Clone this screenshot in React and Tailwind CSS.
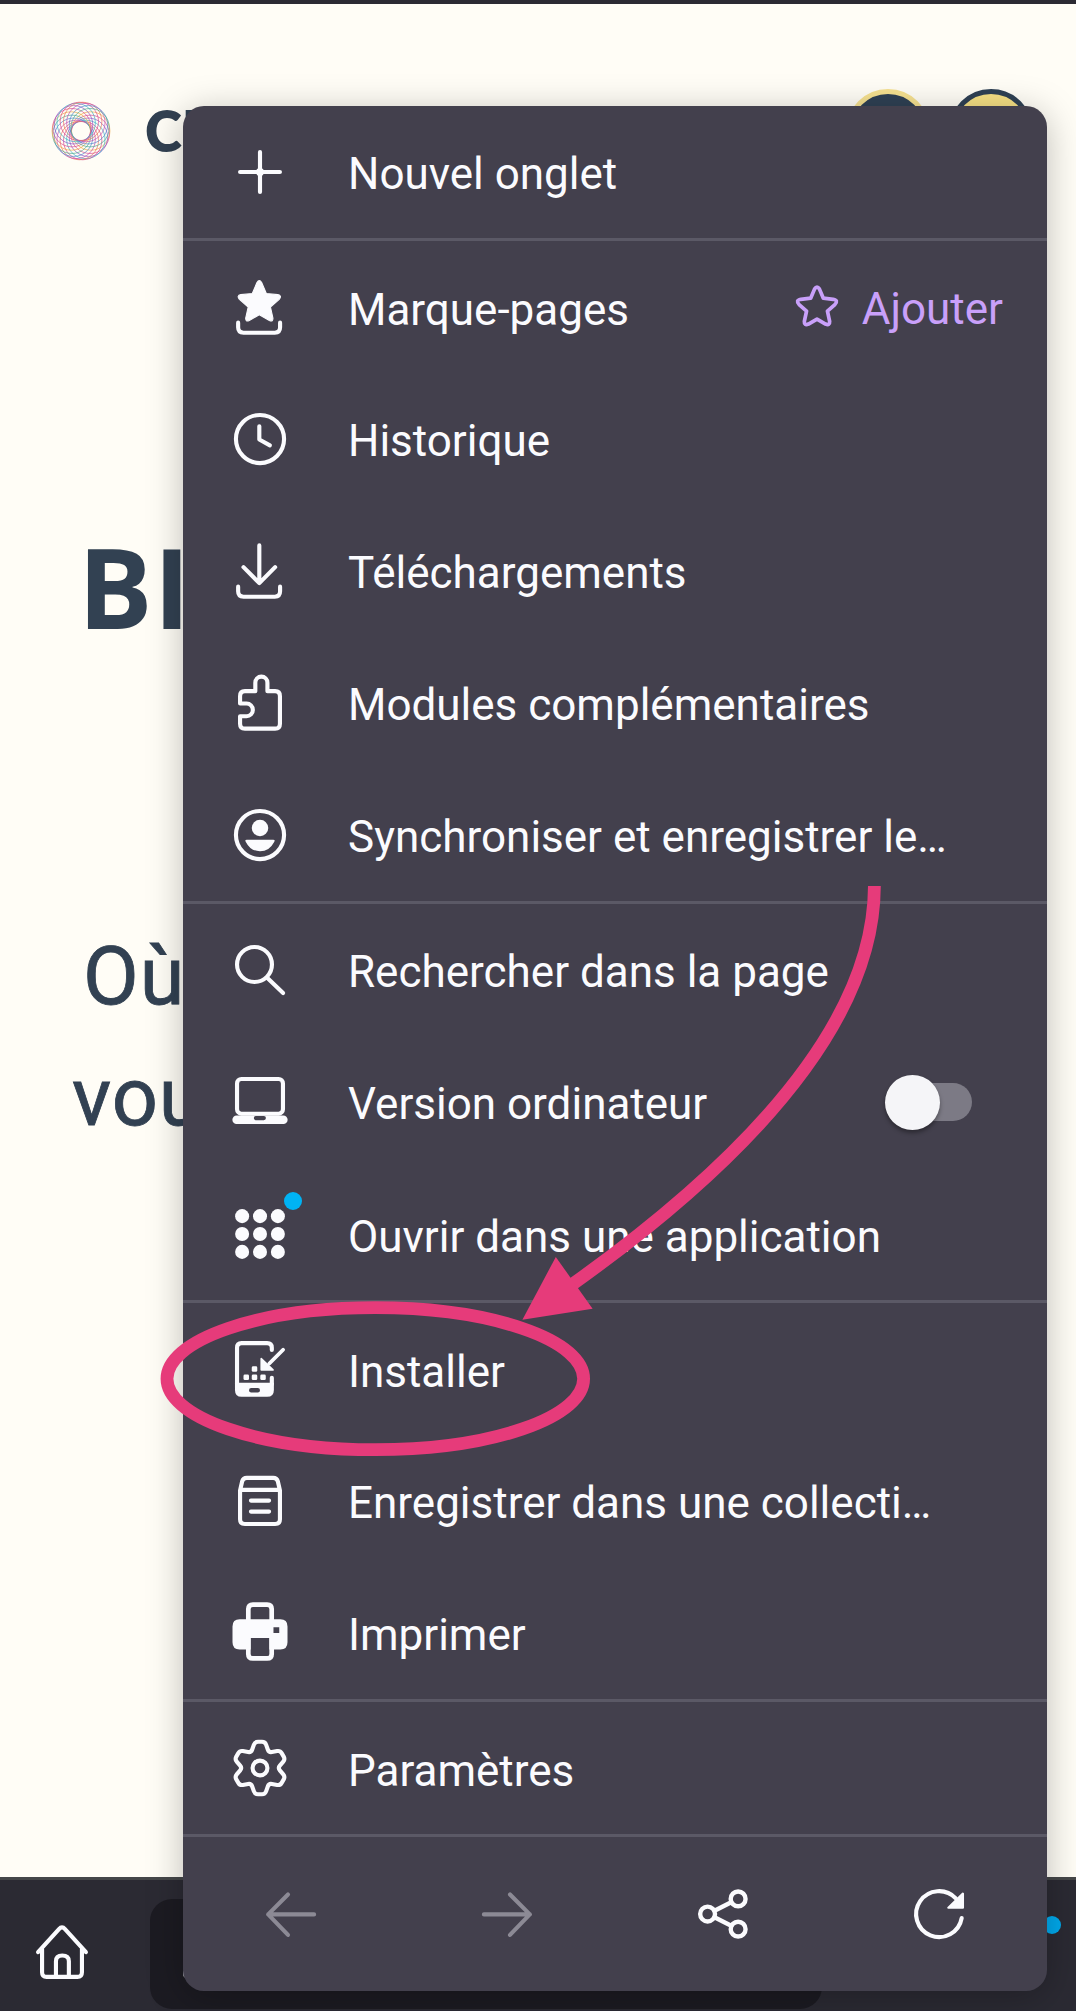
import React from "react";

const Icon = ({ children, className = "" }) => (
  <svg
    viewBox="0 0 24 24"
    className={`size-[66px] shrink-0 ${className}`}
    fill="none"
    stroke="currentColor"
    strokeWidth="1.5"
    strokeLinecap="round"
    strokeLinejoin="round"
  >
    {children}
  </svg>
);

const STAR =
  "M10.9 3.1Q11.75 1.6 12.6 3.1L14.3 7.1L18.5 7.5Q20.1 7.9 19 9.2L15.8 12L16.7 16Q16.8 17.5 15.4 16.9L11.75 14.8L8.1 16.9Q6.7 17.5 6.8 16L7.7 12L4.5 9.2Q3.4 7.9 5 7.5L9.2 7.1Z";

function gearPath() {
  const points = [];
  for (let i = 0; i < 6; i++) {
    const a = (i * 60 - 90) * (Math.PI / 180);
    points.push([a - 0.19, 9.7], [a + 0.19, 9.7], [a + Math.PI / 6, 6.5]);
  }
  const xy = points.map(([a, r]) => [12 + r * Math.cos(a), 12 + r * Math.sin(a)]);
  const towards = (p, q, d) => {
    const l = Math.hypot(q[0] - p[0], q[1] - p[1]);
    return [p[0] + ((q[0] - p[0]) * d) / l, p[1] + ((q[1] - p[1]) * d) / l];
  };
  return (
    xy
      .map((p, i) => {
        const a = towards(p, xy[(i + 17) % 18], 1.1);
        const b = towards(p, xy[(i + 1) % 18], 1.1);
        return `${i ? "L" : "M"}${a[0].toFixed(2)} ${a[1].toFixed(2)}Q${p[0].toFixed(2)} ${p[1].toFixed(2)} ${b[0].toFixed(2)} ${b[1].toFixed(2)}`;
      })
      .join("") + "Z"
  );
}

const icons = {
  plus: (
    <Icon>
      <path d="M12 4.75V19.25M4.75 12H19.25" />
      <circle cx="12" cy="12" r="1.5" fill="currentColor" stroke="none" />
    </Icon>
  ),
  bookmarks: (
    <Icon>
      <path d={STAR} fill="currentColor" strokeWidth="0.4" />
      <path d="M4.05 17.7V19.4Q4.05 21.35 6 21.35H17.4Q19.3 21.35 19.3 19.4V17.7" />
    </Icon>
  ),
  history: (
    <Icon>
      <circle cx="12" cy="12" r="8.75" />
      <path d="M11.75 7.4V12.2L15.6 14.3" />
    </Icon>
  ),
  download: (
    <Icon>
      <path d="M11.75 2.7V16.4M6 10.6L11.75 16.4L17.5 10.6M4.05 17.7V19.4Q4.05 21.35 6 21.35H17.4Q19.3 21.35 19.3 19.4V17.7" />
    </Icon>
  ),
  addons: (
    <Icon>
      <path d="M4.75 9.5Q4.75 7.7 6.5 7.7H10.3V4.6A2.2 2.2 0 0 1 14.7 4.6V7.7H17.5Q19.25 7.7 19.25 9.5V19.5Q19.25 21.3 17.5 21.3H6.5Q4.75 21.3 4.75 19.5V16.8H7.1A2.3 2.3 0 0 0 7.1 12.2H4.75Z" />
    </Icon>
  ),
  account: (
    <Icon>
      <circle cx="12" cy="12" r="8.75" />
      <circle cx="12" cy="9.45" r="3" fill="currentColor" stroke="none" />
      <path d="M7.2 13.7H16.8Q17.7 13.7 17.1 14.6Q15.4 17.9 12 17.9Q8.6 17.9 6.9 14.6Q6.3 13.7 7.2 13.7Z" fill="currentColor" stroke="none" />
    </Icon>
  ),
  search: (
    <Icon>
      <circle cx="10" cy="10" r="6.35" />
      <path d="M14.6 14.8L20.4 20.4" />
    </Icon>
  ),
  laptop: (
    <Icon>
      <rect x="3.65" y="3.65" width="16.7" height="12.6" rx="1.6" />
      <path fillRule="evenodd" stroke="none" fill="currentColor" d="M3.5 16.9H20.5A1.55 1.55 0 0 1 20.5 20H3.5A1.55 1.55 0 0 1 3.5 16.9ZM10.5 17.1A0.75 0.75 0 0 0 10.5 18.6H13.4A0.75 0.75 0 0 0 13.4 17.1Z" />
    </Icon>
  ),
  apps: (
    <Icon>
      {[5.5, 12, 18.5].map((y) =>
        [5.5, 12, 18.5].map((x) => (
          <circle key={`${x}-${y}`} cx={x} cy={y} r="2.55" fill="currentColor" stroke="none" />
        ))
      )}
    </Icon>
  ),
  install: (
    <Icon>
      <path d="M3.65 17.5V4.3Q3.65 2.6 5.3 2.6H14.6Q16.3 2.6 16.3 4.3V5.1M16.3 15.2V17.5" />
      <path fillRule="evenodd" stroke="none" fill="currentColor" d="M2.9 17H17.05V19.6Q17.05 22.1 14.6 22.1H5.3Q2.9 22.1 2.9 19.6ZM8.8 18.9A0.8 0.8 0 0 0 8.8 20.5H11.2A0.8 0.8 0 0 0 11.2 18.9Z" />
      <path d="M20.4 5L15.4 10" strokeWidth="1.4" />
      <path d="M12.5 8.3L16.7 12.3H12.5Z" fill="currentColor" strokeWidth="0.7" />
      <g fill="currentColor" stroke="none">
        <rect x="6" y="14" width="2" height="2" rx="0.5" />
        <rect x="9" y="14" width="2" height="2" rx="0.5" />
        <rect x="12.1" y="14" width="2" height="2" rx="0.5" />
        <rect x="9" y="11" width="2" height="2" rx="0.5" />
      </g>
    </Icon>
  ),
  collection: (
    <Icon>
      <path d="M4.75 8.2L5.5 4.9Q5.9 3.6 7.2 3.6H16.8Q18.1 3.6 18.5 4.9L19.25 8.2V18.6Q19.25 20.35 17.5 20.35H6.5Q4.75 20.35 4.75 18.6ZM4.9 7.95H19.1" />
      <path d="M8.7 11.85H15.3M8.7 15.85H15.3" />
    </Icon>
  ),
  printer: (
    <Icon>
      <path d="M7.75 8V3.3Q7.75 1.65 9.4 1.65H14.6Q16.25 1.65 16.25 3.3V8" strokeWidth="1.7" />
      <path d="M7.75 14V19.6Q7.75 21.25 9.4 21.25H14.6Q16.25 21.25 16.25 19.6V14" strokeWidth="1.7" />
      <path fillRule="evenodd" stroke="none" fill="currentColor" d="M4.6 7H19.4Q22 7 22 9.6V15.4Q22 18 19.4 18H15.4V13.8H8.6V18H4.6Q2 18 2 15.4V9.6Q2 7 4.6 7ZM16.9 9.9V12H19V9.9Z" />
    </Icon>
  ),
  settings: (
    <Icon>
      <path d={gearPath()} />
      <circle cx="12" cy="12" r="2.7" />
    </Icon>
  ),
};

const groups = [
  [{ icon: "plus", label: "Nouvel onglet" }],
  [
    { icon: "bookmarks", label: "Marque-pages", action: "Ajouter", low: true },
    { icon: "history", label: "Historique" },
    { icon: "download", label: "Téléchargements" },
    { icon: "addons", label: "Modules complémentaires" },
    { icon: "account", label: "Synchroniser et enregistrer le…" },
  ],
  [
    { icon: "search", label: "Rechercher dans la page" },
    { icon: "laptop", label: "Version ordinateur", toggle: true },
    { icon: "apps", label: "Ouvrir dans une application", badge: true, low: true },
  ],
  [
    { icon: "install", label: "Installer", low: true },
    { icon: "collection", label: "Enregistrer dans une collecti…" },
    { icon: "printer", label: "Imprimer" },
  ],
  [{ icon: "settings", label: "Paramètres", low: true }],
];

function Row({ icon, label, action, toggle, badge, low }) {
  return (
    <div className="flex h-[132px] items-center pl-11 text-[44px] leading-[52px]">
      <div className="relative">
        {icons[icon]}
        {badge && <span className="absolute -top-[9px] left-[57px] size-[18px] rounded-full bg-[#00b3f4]" />}
      </div>
      <span className={`ml-[55px] whitespace-nowrap ${low ? "pt-1.5" : "pt-1"}`}>{label}</span>
      {action && (
        <div className="ml-auto mr-11 flex items-center text-[#c9a0fa]">
          <Icon>
            <path
              d="M11.1 5.5Q12 4.1 12.9 5.5L14.3 8.8L17.9 9.2Q19.9 9.6 18.5 11.1L15.8 13.5L16.6 17.2Q16.7 18.9 15.1 18.2L12 16.4L8.9 18.2Q7.3 18.9 7.4 17.2L8.2 13.5L5.5 11.1Q4.1 9.6 6.1 9.2L9.7 8.8Z"
              strokeWidth="1.35"
            />
          </Icon>
          <span className="ml-3 pt-1">{action}</span>
        </div>
      )}
      {toggle && (
        <div className="ml-auto mr-[75px] flex h-[38px] w-[84px] items-center rounded-full bg-[#7c7a85]">
          <span className="-ml-[3px] size-[55px] shrink-0 rounded-full bg-[#f5f5f8] shadow-[0_3px_4px_rgba(0,0,0,0.35)]" />
        </div>
      )}
    </div>
  );
}

const Divider = () => <div className="h-[3px] bg-[#5b5966]" />;

function Menu() {
  return (
    <div className="absolute left-[183px] top-[106px] w-[864px] rounded-[21px] bg-[#43404d] text-[#fbfbfe] shadow-[0_6px_36px_rgba(0,0,0,0.26)]">
      {groups.map((rows, i) => (
        <React.Fragment key={i}>
          {rows.map((r) => (
            <Row key={r.label} {...r} />
          ))}
          <Divider />
        </React.Fragment>
      ))}
      <div className="grid h-[154px] grid-cols-4 place-items-center">
        <Icon className="text-[#8c8a95]">
          <path d="M20.4 12.15H3.7M10.9 4.9L3.7 12.15L10.9 19.6" />
        </Icon>
        <Icon className="text-[#8c8a95]">
          <path d="M3.6 12.15H20.3M13.1 4.9L20.3 12.15L13.1 19.6" />
        </Icon>
        <Icon>
          <g strokeWidth="1.6">
            <circle cx="6.4" cy="12" r="2.7" />
            <circle cx="17.5" cy="6.5" r="2.7" />
            <circle cx="17.5" cy="17.5" r="2.7" />
            <path d="M8.9 10.8L15 7.7M8.9 13.2L15 16.3" />
          </g>
        </Icon>
        <Icon>
          <path d="M20.25 13.5A8.35 8.35 0 1 1 18.1 6.3" />
          <path d="M20.7 4.6V9.7H15.4Z" fill="currentColor" strokeWidth="0.8" />
        </Icon>
      </div>
    </div>
  );
}

const LOGO_COLORS = ["#f0a840", "#e9735c", "#d8478b", "#c04fb0", "#8a55c8", "#4b86d0", "#35b0c5", "#4aa890", "#d8478b"];

function Logo() {
  return (
    <svg viewBox="-30 -30 60 60" className="size-[60px] shrink-0" fill="none" strokeWidth="0.8">
      {Array.from({ length: 18 }, (_, i) => {
        const a = (i / 18) * 2 * Math.PI;
        return (
          <circle
            key={i}
            cx={9.7 * Math.cos(a)}
            cy={9.7 * Math.sin(a)}
            r="19.2"
            stroke={LOGO_COLORS[(i * 2) % 9]}
            strokeOpacity="0.85"
          />
        );
      })}
    </svg>
  );
}

export default function App() {
  return (
    <div className="relative flex h-[2011px] w-[1076px] flex-col overflow-hidden bg-[#fffdf6] font-['Roboto',sans-serif] text-[#324152]">
      <div className="h-1 shrink-0 bg-[#2b2a33]" />
      <header className="flex h-[252px] shrink-0 items-center pl-[51px] pr-[43px] pt-[2px]">
        <Logo />
        <span className="ml-[34px] font-['Lato',sans-serif] text-[56px] font-extrabold leading-none">CI</span>
        <div className="ml-auto flex gap-[19px]">
          <span className="size-[84px] rounded-full border-[5px] border-[#f6e190] bg-[#2f4154]" />
          <span className="size-[84px] rounded-full border-[5px] border-[#2f4154] bg-[#f6e084]" />
        </div>
      </header>
      <main className="flex-1 overflow-hidden whitespace-nowrap">
        <h1 className="pl-[78px] pt-[260px] font-['Open_Sans',sans-serif] text-[111px] font-bold leading-[140px] tracking-[1px]">BI</h1>
        <p className="pl-[83px] pt-[260px] text-[81px] leading-[121px] tracking-[1px] [-webkit-text-stroke:0.8px_#324152]">
          Où
          <br />
          <span className="-ml-[11px]">vou</span>
        </p>
      </main>
      <footer className="relative flex h-[134px] shrink-0 border-t-[3px] border-[#454749] bg-[#2b2a33] pt-[19px] text-[#fbfbfe]">
        <Icon className="ml-[29px] mt-[21px]">
          <path d="M3.3 11.7L10.9 3.3Q12 2.1 13.1 3.3L20.7 11.7M4.75 10.6V19Q4.75 20.7 6.4 20.7H17.6Q19.25 20.7 19.25 19V10.6M9.8 20.5V15Q9.8 12.9 12.1 12.9Q14.5 12.9 14.5 15V20.5" />
        </Icon>
        <div className="ml-[55px] h-[110px] w-[672px] rounded-[22px] bg-[#1c1b22] pl-[33px] pt-[70px]">
          <div className="h-[9px] w-10 rounded-sm bg-[#b5b5bc]" />
        </div>
        <span className="absolute right-[15px] top-[36px] size-[18px] rounded-full bg-[#00a9ec]" />
      </footer>

      <Menu />

      <svg viewBox="0 0 1076 2011" className="pointer-events-none absolute inset-0 size-full" fill="none" stroke="#e63b7a" strokeWidth="12.8">
        <path d="M874.4 886Q874 1070 570 1286" />
        <path d="M522.4 1319.7L555.8 1257L592.6 1308.7Z" fill="#e63b7a" stroke="none" />
        <ellipse cx="375.3" cy="1378.7" rx="208.3" ry="71" />
      </svg>
    </div>
  );
}
